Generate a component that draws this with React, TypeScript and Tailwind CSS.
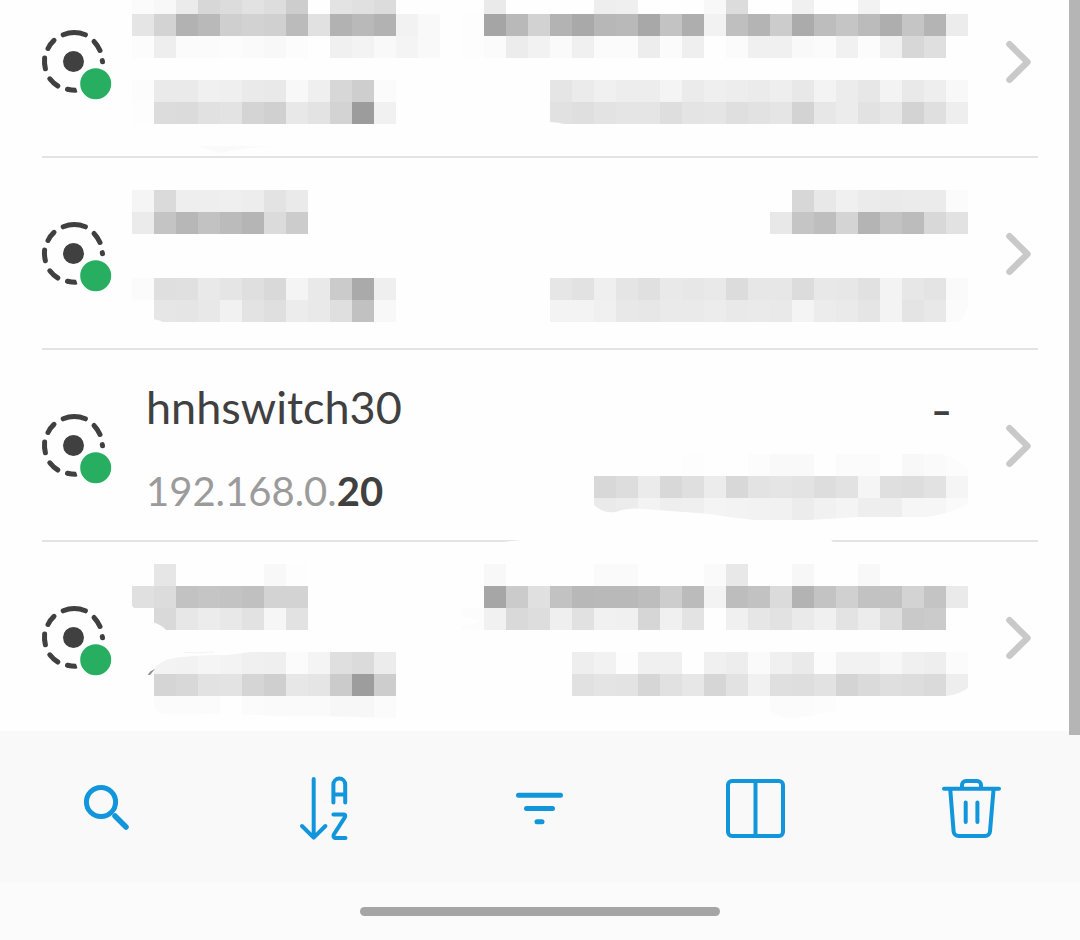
import type { ReactNode } from "react";

const CELL = 22;

type MosaicProps = {
  cols: number;
  top: number;
  rows: string[];
  children?: ReactNode;
};

/* Pixelated cover for private text. Each row lists one grey level per cell, ".." leaves a cell clear. */
function Mosaic({ cols, top, rows, children }: MosaicProps) {
  const width = cols * CELL;
  return (
    <svg
      width={width}
      height={96}
      viewBox={`0 0 ${width} 96`}
      className="shrink-0 overflow-visible"
      shapeRendering="crispEdges"
      aria-hidden="true"
    >
      {rows.map((row, r) =>
        row.split(" ").map((grey, c) =>
          grey === ".." ? null : (
            <rect
              key={`${r}-${c}`}
              x={c * CELL}
              y={top + r * CELL}
              width={CELL}
              height={CELL}
              fill={`#${grey}${grey}${grey}`}
            />
          ),
        ),
      )}
      <g fill="#fefefe" shapeRendering="auto">
        {children}
      </g>
    </svg>
  );
}

function StatusIcon() {
  return (
    <svg
      width="72"
      height="72"
      viewBox="42 25 72 72"
      className="shrink-0 overflow-visible"
      role="img"
      aria-label="Online"
    >
      <g fill="none" stroke="#404040" strokeWidth="5" strokeLinecap="round">
        <path d="M63.2 34.8a29 29 0 0 1 22.2 0" />
        <path d="M94 41.5q3.800 4 6 9" />
        <path d="M54 40.300q-4 3.700-6 8.200" />
        <path d="M44.600 58q-.5 5.500.8 10.800" />
        <path d="M49.800 78.800q3.500 4.500 8 7.200" />
        <path d="M67.500 89.300q4 1 8 1" />
        <path d="M102.300 60.600l.2 1.200" />
      </g>
      <circle cx="73.500" cy="61.500" r="10.500" fill="#404040" />
      <circle cx="95.700" cy="83.700" r="20" fill="#fefefe" />
      <circle cx="95.700" cy="83.700" r="15.500" fill="#27ae60" />
    </svg>
  );
}

function Chevron() {
  return (
    <svg width="36" height="48" viewBox="1002 37 36 48" className="shrink-0" aria-hidden="true">
      <path
        d="M1009.500 44.300 1027.500 62l-18 17.800"
        fill="none"
        stroke="#c9c9c9"
        strokeWidth="6.500"
        strokeLinecap="round"
        strokeLinejoin="round"
      />
    </svg>
  );
}

type DeviceProps = {
  label: string;
  last?: boolean;
  name: ReactNode;
  vendor: ReactNode;
  address: ReactNode;
  hardware: ReactNode;
};

function Device({ label, last, name, vendor, address, hardware }: DeviceProps) {
  return (
    <li className={last ? "mx-[42px] h-48 border-b-2 border-transparent" : "mx-[42px] h-48 border-b-2 border-[#e3e3e3]"}>
      <button type="button" aria-label={label} className="flex h-full w-full items-center text-left">
        <StatusIcon />
        <span className="mr-[34px] ml-[18px] flex flex-1 flex-col self-start">
          <span className="flex h-24 items-start justify-between">
            {name}
            {vendor}
          </span>
          <span className="flex h-24 items-start justify-between">
            {address}
            {hardware}
          </span>
        </span>
        <Chevron />
      </button>
    </li>
  );
}

function ToolButton({ label, origin, children }: { label: string; origin: number; children: ReactNode }) {
  return (
    <button type="button" aria-label={label} className="flex items-center justify-center">
      <svg
        width="72"
        height="72"
        viewBox={`${origin} 771 72 72`}
        fill="none"
        stroke="#1296db"
        strokeWidth="4"
        strokeLinecap="round"
        strokeLinejoin="round"
        aria-hidden="true"
      >
        {children}
      </svg>
    </button>
  );
}

export default function App() {
  return (
    <div className="flex h-screen flex-col bg-[#fefefe] font-['Lato',sans-serif] text-[#404040]">
      <div className="relative min-h-0 flex-1">
        <main className="h-full overflow-hidden">
          <ul className="-mt-[34px]">
            <Device
              label="Device 1"
              name={
                <Mosaic
                  cols={14}
                  top={26}
                  rows={[
                    "fb f8 eb d7 dc e2 dd cd .. e3 e0 dc .. ..",
                    "e5 d3 b2 b9 cf d2 d0 bb e1 b2 b9 b2 f2 f9",
                    "fc ee fb fb fc fa f8 fc .. f0 f3 f9 f4 f9",
                  ]}
                />
              }
              vendor={
                <Mosaic
                  cols={23}
                  top={26}
                  rows={[
                    ".. ea .. .. .. .. ee ef .. .. .. f8 dc .. .. f0 .. .. f2 .. .. .. ..",
                    "fd a5 b9 d2 b3 a9 b7 b9 a8 c3 ae f2 bf b4 cc ab bd c5 bb ae c5 b4 ec",
                    "fd fb ec f2 fa f0 fb fb ed fb ef .. fb f0 f0 f9 fb f1 fc f0 d7 df ..",
                  ]}
                />
              }
              address={
                <Mosaic
                  cols={14}
                  top={18}
                  rows={["fc ea ea f0 ef ea e9 f8 ef d7 ce fb", "fd dc db e1 e3 d4 d0 e8 e3 d3 9c f1"]}
                >
                  <path d="M66 84h75q-32 2-52 7-12-2-23-7z" fill="#fafafa" />
                </Mosaic>
              }
              hardware={
                <Mosaic
                  cols={23}
                  top={18}
                  rows={[
                    ".. .. .. .. e5 eb f0 ed ed f4 eb ef ed eb ee e8 f3 ec e7 f3 e9 ee f8",
                    ".. .. .. .. e1 df e3 e5 e5 de e4 e5 df e2 e5 d3 e7 ec e2 e7 d3 df ee",
                  ]}
                >
                  <path d="M87 60q10 0 18 3H87z" />
                </Mosaic>
              }
            />
            <Device
              label="Device 2"
              name={
                <Mosaic
                  cols={14}
                  top={32}
                  rows={["f5 da ee ee ef ed e3 ea", "eb c4 b7 c2 bb b5 db cc"]}
                />
              }
              vendor={
                <Mosaic
                  cols={23}
                  top={32}
                  rows={[
                    ".. .. .. .. .. .. .. .. .. .. .. .. .. .. .. d7 e8 f0 eb ea eb eb fb",
                    ".. .. .. .. .. .. .. .. .. .. .. .. .. .. e8 c5 be d4 b4 c3 bc d8 e2",
                  ]}
                />
              }
              address={
                <Mosaic
                  cols={14}
                  top={24}
                  rows={["fb df e0 e9 e5 df d9 f4 e9 cb aa ef", ".. e6 e5 e8 f1 e3 df ec e9 df c1 f8"]}
                >
                  <path d="M21 65q7 1 12 4H21z" />
                </Mosaic>
              }
              hardware={
                <Mosaic
                  cols={23}
                  top={24}
                  rows={[
                    ".. .. .. .. e6 e2 ef e5 e0 e9 e7 e9 dc e7 e7 dc e8 e7 e1 f3 e7 e4 fa",
                    ".. .. .. .. f3 f3 f0 e8 e7 ea ea ec e9 ea e9 f4 ec ea e5 f3 e4 e8 fb",
                  ]}
                >
                  <path d="M507 50q-4 14-13 19h13z" />
                </Mosaic>
              }
            />
            <Device
              label="hnhswitch30, 192.168.0.20"
              name={<span className="pt-7 pl-3.5 text-[45px] leading-[58px]">hnhswitch30</span>}
              vendor={
                <span className="pt-8 pr-4 font-['Inter',sans-serif] text-[45px] leading-[58px]">-</span>
              }
              address={
                <span className="pt-4 pl-3.5 text-[40px] leading-[58px] text-[#9b9b9b]">
                  192.168.0.<b className="font-bold text-[#404040]">20</b>
                </span>
              }
              hardware={
                <Mosaic
                  cols={23}
                  top={8}
                  rows={[
                    ".. .. .. .. .. .. .. .. .. .. fd .. .. fc f9 f9 .. fb fb .. f8 fa fc",
                    ".. .. .. .. .. .. d8 dd eb d8 df ec d8 e3 e5 e3 dd e2 f5 df dd e2 f5",
                    ".. .. .. .. .. .. ea ec f3 ee ef f4 f3 f2 f1 ec f1 f4 ee ee f6 f6 fa",
                  ]}
                >
                  <path d="M131 58q10 10 23 8 12-5 28-3l66 5q40 7 68 7 38-1 80-4h68q30-4 43-15V76H131z" />
                  <path d="M475 7q22 4 32 18V7z" />
                  <path d="M40 96q25-3 55-3h273q2 3 6 4H40z" />
                </Mosaic>
              }
            />
            <Device
              label="Device 4"
              last
              name={
                <Mosaic
                  cols={14}
                  top={22}
                  rows={[
                    ".. e6 .. .. .. .. f8 fd",
                    "e0 dc c2 c5 c3 c0 d3 d3",
                    ".. d9 e7 ec e8 e2 f6 e2",
                  ]}
                >
                  <path d="M-1 58q0 7 5 9h-5zM21 80q9 3 14 9H21z" />
                </Mosaic>
              }
              vendor={
                <Mosaic
                  cols={23}
                  top={22}
                  rows={[
                    ".. f8 .. .. .. .. fa fa .. .. .. fa e8 .. .. f7 .. .. f8 .. .. .. ..",
                    ".. a6 cb e0 c2 b8 b9 b9 bd cd bb f3 bd c2 db b3 c3 d0 c2 c2 d3 c4 ea",
                    "fc f1 d9 dd ef e1 f1 f0 d6 f0 e3 .. f0 e6 e2 ea f0 e3 ec de c9 cb ..",
                  ]}
                >
                  <path d="M-1 74q16 3 18 5-3 3-18 5z" />
                </Mosaic>
              }
              address={
                <Mosaic
                  cols={14}
                  top={14}
                  rows={[
                    ".. f3 f2 f5 f3 f0 ef fb f4 df db ec",
                    ".. d5 d8 e2 e3 d5 cf e7 e5 cb 9d cd",
                    ".. fb fb fb fe fb fa fa fa f7 f7 fb",
                  ]}
                >
                  <path d="M21 13h105q-20 3-30 4-45 0-62 5-9 4-13 10z" />
                  <path d="M21 68q4 7 12 8 28 2 55-1 40 3 80 3 55 0 97 3H21z" />
                  <path d="M16 37q1-4 7-6l-5 6z" fill="#8f8f8f" />
                  <path d="M52 14.500q15 1 30-.5" fill="none" stroke="#f4f4f4" />
                </Mosaic>
              }
              hardware={
                <Mosaic
                  cols={23}
                  top={14}
                  rows={[
                    ".. .. .. .. .. ee f2 fd f0 f0 .. f0 ed fa f0 ea fc f2 f2 f7 f0 ee fb",
                    ".. .. .. .. .. e1 e4 e3 d6 e1 e7 d6 e2 f1 df de e2 d4 da df dd da ee",
                    ".. .. .. .. .. .. .. .. .. .. .. .. .. .. fb fb fc",
                  ]}
                >
                  <path d="M507 49q-8 7-22 9h22z" />
                  <path d="M307 70q8 11 22 10 25-2 46-8v9h-68z" />
                </Mosaic>
              }
            />
          </ul>
        </main>
        <div className="absolute top-0 right-0 -bottom-1 z-10 w-[11px] bg-[#b5b5b5]" />
      </div>

      <footer className="shrink-0 bg-[#fbfbfb]">
        <nav aria-label="List tools" className="grid h-[152px] grid-cols-5 bg-[#f9f9f9]">
          <ToolButton label="Search" origin={72}>
            <circle cx="101" cy="802" r="14.600" strokeWidth="5" />
            <path d="M115 816l11 11" strokeWidth="5.500" />
          </ToolButton>
          <ToolButton label="Sort A to Z" origin={288}>
            <path d="M313.700 779v58.500M302 826l11.700 11.700L325.400 826" />
            <path d="M333.400 802.500V784.500a5.800 5.800 0 0 1 11.800 0v18M333.400 794.500h11.800" />
            <path d="M333.400 814.400h10.400q2.400.6 1 2.900l-11 17.200q-1 3 1.200 3.500h10.500" />
          </ToolButton>
          <ToolButton label="Filter" origin={504}>
            <path d="M518.500 795.300h42M526.500 808.500h26M537 821.700h5" strokeWidth="5" />
          </ToolButton>
          <ToolButton label="Columns" origin={720}>
            <rect x="728" y="781" width="55" height="55" rx="4" />
            <path d="M755.500 781v55" />
          </ToolButton>
          <ToolButton label="Delete" origin={936}>
            <path d="M944 788.800h55" />
            <path d="M962 788v-3a4 4 0 0 1 4-4h11a4 4 0 0 1 4 4v3" />
            <path d="M950.300 790l3.300 41.500a5 5 0 0 0 5 4.500h26.400a5 5 0 0 0 5-4.500l3.500-41.500" />
            <path d="M965.700 802.500v19.500M977.400 802.500v19.500" />
          </ToolButton>
        </nav>
        <div className="flex h-[57px] items-center justify-center">
          <div className="h-[9px] w-1/3 rounded-full bg-[#a5a5a5]" />
        </div>
      </footer>
    </div>
  );
}
